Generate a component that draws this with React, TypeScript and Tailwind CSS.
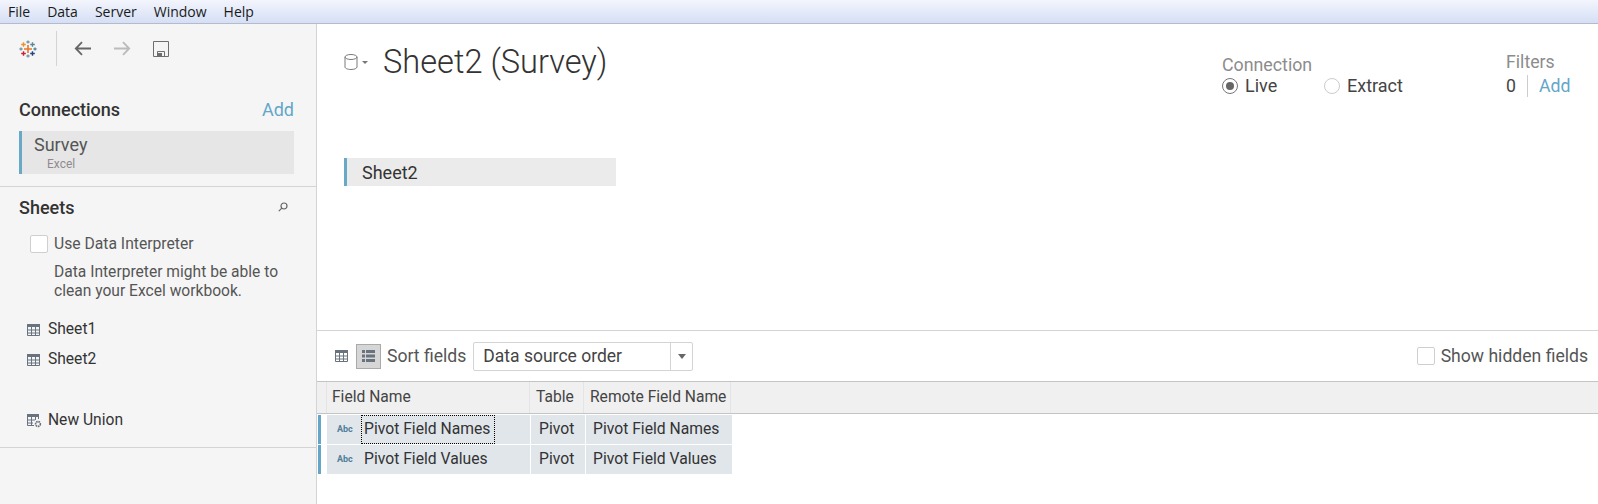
import React from 'react';

function TableauLogo() {
  const cross = (x: number, y: number, r: number, color: string, w = 1.4) => (
    <path d={`M${x - r} ${y}H${x + r}M${x} ${y - r}V${y + r}`} stroke={color} strokeWidth={w} fill="none" />
  );
  return (
    <svg width="18" height="18" viewBox="0 0 18 18">
      {cross(9, 9, 4, '#e8762b', 1.6)}
      {cross(9, 2, 1.6, '#7099a6')}
      {cross(9, 16, 1.6, '#7099a6')}
      {cross(2, 9, 1.6, '#7099a6')}
      {cross(16, 9, 1.6, '#59879b')}
      {cross(4.5, 4.5, 2.3, '#eb912b')}
      {cross(13.5, 4.5, 2.3, '#5b879b')}
      {cross(4.5, 13.5, 2.3, '#c72037')}
      {cross(13.5, 13.5, 2.3, '#1f447e')}
    </svg>
  );
}

function GridIcon({ className = '' }: { className?: string }) {
  return (
    <svg width="13" height="12" viewBox="0 0 13 12" className={className}>
      <rect x="0" y="0" width="13" height="3" fill="#69727f" />
      <path d="M.5 3V11.5H12.5V3M.5 6H12.5M.5 9H12.5M4.5 3V11.5M8.5 3V11.5" stroke="#69727f" fill="none" />
    </svg>
  );
}

function Checkbox() {
  return <span className="block w-[18px] h-[18px] bg-white border border-[#cfcfcf] rounded-[2px] shrink-0" />;
}

function FieldRow({ name, focused }: { name: string; focused?: boolean }) {
  return (
    <div className="flex h-[29px] mb-px w-[414px] text-[15.7px] text-[#333]">
      <div className="w-[3px] bg-[#63a6c9]" />
      <div className="w-[6px]" />
      <div className="w-[203px] bg-[#e1e6eb] flex items-center pl-[10px]">
        <span className="w-[24px] text-[9px] font-bold text-[#4f7f99]">Abc</span>
        <span
          className={`h-[29px] pb-[2px] flex items-center pl-[2px] w-[134px] whitespace-nowrap border border-dotted ${
            focused ? 'border-black' : 'border-transparent'
          }`}
        >
          {name}
        </span>
      </div>
      <div className="w-[54px] ml-px bg-[#e1e6eb] flex items-center pl-[8px] pb-[2px]">Pivot</div>
      <div className="flex-1 ml-px bg-[#e1e6eb] flex items-center pl-[7px] pb-[2px] whitespace-nowrap">{name}</div>
    </div>
  );
}

export default function App() {
  return (
    <div className='w-[1598px] h-[504px] flex flex-col bg-white overflow-hidden font-["Roboto","Liberation_Sans",sans-serif]'>
      {/* menu bar */}
      <div className='h-[24px] shrink-0 flex items-center gap-[17px] pl-[8px] pb-[1px] text-[14px] text-[#1a1a1a] bg-gradient-to-b from-[#f3f5fc] to-[#d5dff5] border-b border-[#b4bccb] font-["Open_Sans",sans-serif]'>
        <span>File</span>
        <span>Data</span>
        <span>Server</span>
        <span>Window</span>
        <span>Help</span>
      </div>

      <div className="flex-1 flex min-h-0">
        {/* left sidebar */}
        <aside className="w-[317px] shrink-0 bg-[#f5f5f5] border-r border-[#d4d4d4] flex flex-col">
          <div className="h-[49px] flex items-center pl-[19px]">
            <TableauLogo />
            <div className="w-px h-[35px] bg-[#d4d4d4] ml-[19px] mr-[17px]" />
            <svg width="17" height="15" viewBox="0 0 17 15" fill="none" stroke="#666" strokeWidth="1.8">
              <path d="M17 7.5H2M8 1.2L1.8 7.5L8 13.8" />
            </svg>
            <svg width="17" height="15" viewBox="0 0 17 15" fill="none" stroke="#bbb" strokeWidth="1.8" className="ml-[23px]">
              <path d="M0 7.5H15M9 1.2L15.2 7.5L9 13.8" />
            </svg>
            <svg width="16" height="16" viewBox="0 0 16 16" fill="none" className="ml-[22px]">
              <path d="M.5.5H15.5V15.5H.5Z" stroke="#6e6e6e" />
              <path d="M4.5 15V10.5H11.5V15" stroke="#6e6e6e" />
              <rect x="5" y="12" width="4" height="3.5" fill="#6e6e6e" />
            </svg>
          </div>

          <div className="px-[19px] mt-[24px] flex items-center justify-between h-[24px] pr-[22px]">
            <span className="text-[18px] font-medium text-[#333] pt-[1px]">Connections</span>
            <span className="text-[18px] text-[#63a6c9]">Add</span>
          </div>
          <div className="ml-[19px] mr-[22px] mt-[10px] h-[43px] bg-[#e6e6e6] border-l-[3px] border-[#6aa8c8] pl-[12px] flex flex-col">
            <span className="text-[18px] leading-[20px] mt-[4px] text-[#555]">Survey</span>
            <span className="text-[12px] leading-[14px] mt-[2px] ml-[13px] text-[#928a8f]">Excel</span>
          </div>
          <div className="h-px bg-[#d4d4d4] mt-[12px]" />

          <div className="pl-[19px] pr-[28px] mt-[8px] h-[24px] flex items-center justify-between">
            <span className="text-[18px] font-medium text-[#333]">Sheets</span>
            <svg width="10" height="10" viewBox="0 0 10 10" fill="none" stroke="#666" strokeWidth="1.2">
              <circle cx="6" cy="4" r="3" />
              <path d="M3.8 6.2L.8 9.2" />
            </svg>
          </div>
          <div className="pl-[30px] mt-[15px] flex items-center gap-[6px] h-[19px]">
            <Checkbox />
            <span className="text-[15.7px] text-[#555]">Use Data Interpreter</span>
          </div>
          <p className="pl-[54px] mt-[10px] text-[15.6px] leading-[19px] text-[#555] w-[300px]">
            Data Interpreter might be able to clean your Excel workbook.
          </p>

          <div className="pl-[27px] mt-[14px] flex items-center gap-[8px] h-[30px] text-[15.6px] text-[#333]">
            <GridIcon />
            <span>Sheet1</span>
          </div>
          <div className="pl-[27px] flex items-center gap-[8px] h-[30px] text-[15.6px] text-[#333]">
            <GridIcon />
            <span>Sheet2</span>
          </div>
          <div className="pl-[27px] mt-[31px] flex items-center gap-[8px] h-[30px] text-[15.6px] text-[#333]">
            <svg width="15" height="14" viewBox="0 0 15 14" className="shrink-0 -mr-[2px]">
              <rect x="0" y="0" width="12" height="3" fill="#69727f" />
              <path d="M.5 3V11.5H7M.5 6H8M.5 9H6M4.5 3V11.5M8.5 3V6M11.5 3V5" stroke="#69727f" fill="none" />
              <circle cx="11" cy="10" r="2.4" fill="none" stroke="#69727f" strokeWidth="1.6" strokeDasharray="1.5 .6" />
            </svg>
            <span>New Union</span>
          </div>
          <div className="h-px bg-[#d4d4d4] mt-[11px]" />
        </aside>

        {/* main */}
        <main className="flex-1 min-w-0 flex flex-col">
          <div className="h-[306px] shrink-0 pl-[27px] pt-[20px]">
            <div className="flex items-start">
              <div className="flex items-center w-[39px] h-[36px]">
                <svg width="14" height="16" viewBox="0 0 14 16" fill="none" stroke="#7a7a7a">
                  <ellipse cx="7" cy="3" rx="6" ry="2.5" />
                  <path d="M1 3V13C1 14.4 3.7 15.5 7 15.5S13 14.4 13 13V3" />
                </svg>
                <span className="ml-[4px] w-0 h-0 border-x-[3px] border-x-transparent border-t-[3px] border-t-[#777]" />
              </div>
              <h1 className="text-[32.6px] leading-[36px] font-light text-[#333]">Sheet2 (Survey)</h1>
              <div className="ml-auto w-[285px] pt-[11px]">
                <div className="text-[17.8px] leading-[20px] text-[#8c8c8c]">Connection</div>
                <div className="flex items-center text-[18px] leading-[22px] text-[#444]">
                  <span className="w-[16px] h-[16px] rounded-full border border-[#777] flex items-center justify-center bg-white">
                    <span className="w-[8px] h-[8px] rounded-full bg-[#666]" />
                  </span>
                  <span className="ml-[7px] w-[79px]">Live</span>
                  <span className="w-[16px] h-[16px] rounded-full border border-[#ccc] bg-white" />
                  <span className="ml-[7px]">Extract</span>
                </div>
              </div>
              <div className="w-[91px] pt-[8px]">
                <div className="text-[17.7px] leading-[20px] text-[#8c8c8c] -ml-[1px]">Filters</div>
                <div className="flex items-center text-[17.7px] leading-[22px] mt-[3px]">
                  <span className="text-[#444] -ml-[1px] pr-[11px] border-r border-[#ccc]">0</span>
                  <span className="text-[#63a6c9] pl-[11px]">Add</span>
                </div>
              </div>
            </div>
            <div className="mt-[61px] w-[272px] h-[28px] bg-[#ebebeb] border-l-[3px] border-[#6aa8c8] pl-[15px] flex items-center text-[18px] text-[#333]">
              Sheet2
            </div>
          </div>

          <div className="h-[52px] shrink-0 border-t border-[#d4d4d4] border-b border-b-[#c4c4c4] flex items-center pl-[18px] pr-[10px] text-[17.6px] text-[#555]">
            <GridIcon />
            <span className="ml-[8px] w-[25px] h-[25px] bg-[#d6d6d6] border border-[#aaa] flex items-center justify-center">
              <svg width="13" height="12" viewBox="0 0 13 12" fill="#69727f">
                <path d="M0 0H3V3H0ZM4 0H13V3H4ZM0 4.5H3V7.5H0ZM4 4.5H13V7.5H4ZM0 9H3V12H0ZM4 9H13V12H4Z" />
              </svg>
            </span>
            <span className="ml-[6px]">Sort fields</span>
            <div className="ml-[7px] w-[220px] h-[29px] bg-white border border-[#d4d4d4] rounded-[2px] flex items-center">
              <span className="flex-1 pl-[9px] text-[#444] text-[17.5px]">Data source order</span>
              <span className="w-[22px] h-full border-l border-[#d4d4d4] flex items-center justify-center">
                <span className="w-0 h-0 border-x-[4px] border-x-transparent border-t-[5px] border-t-[#666]" />
              </span>
            </div>
            <div className="ml-auto flex items-center gap-[6px]">
              <Checkbox />
              <span className="text-[#555]">Show hidden fields</span>
            </div>
          </div>

          <div className="h-[32px] shrink-0 bg-[#f0f0f0] border-b border-[#c4c4c4] flex text-[15.6px] text-[#444]">
            <div className="w-[10px] border-r border-[#e4e4e4]" />
            <div className="w-[203px] border-r border-[#e4e4e4] flex items-center pl-[5px] pt-[1px]">Field Name</div>
            <div className="w-[54px] border-r border-[#e4e4e4] flex items-center pl-[6px] pt-[1px]">Table</div>
            <div className="w-[147px] border-r border-[#e4e4e4] flex items-center pl-[6px] pt-[1px] whitespace-nowrap">Remote Field Name</div>
          </div>
          <div className="pt-[1px] pl-[1px]">
            <FieldRow name="Pivot Field Names" focused />
            <FieldRow name="Pivot Field Values" />
          </div>
        </main>
      </div>
    </div>
  );
}
